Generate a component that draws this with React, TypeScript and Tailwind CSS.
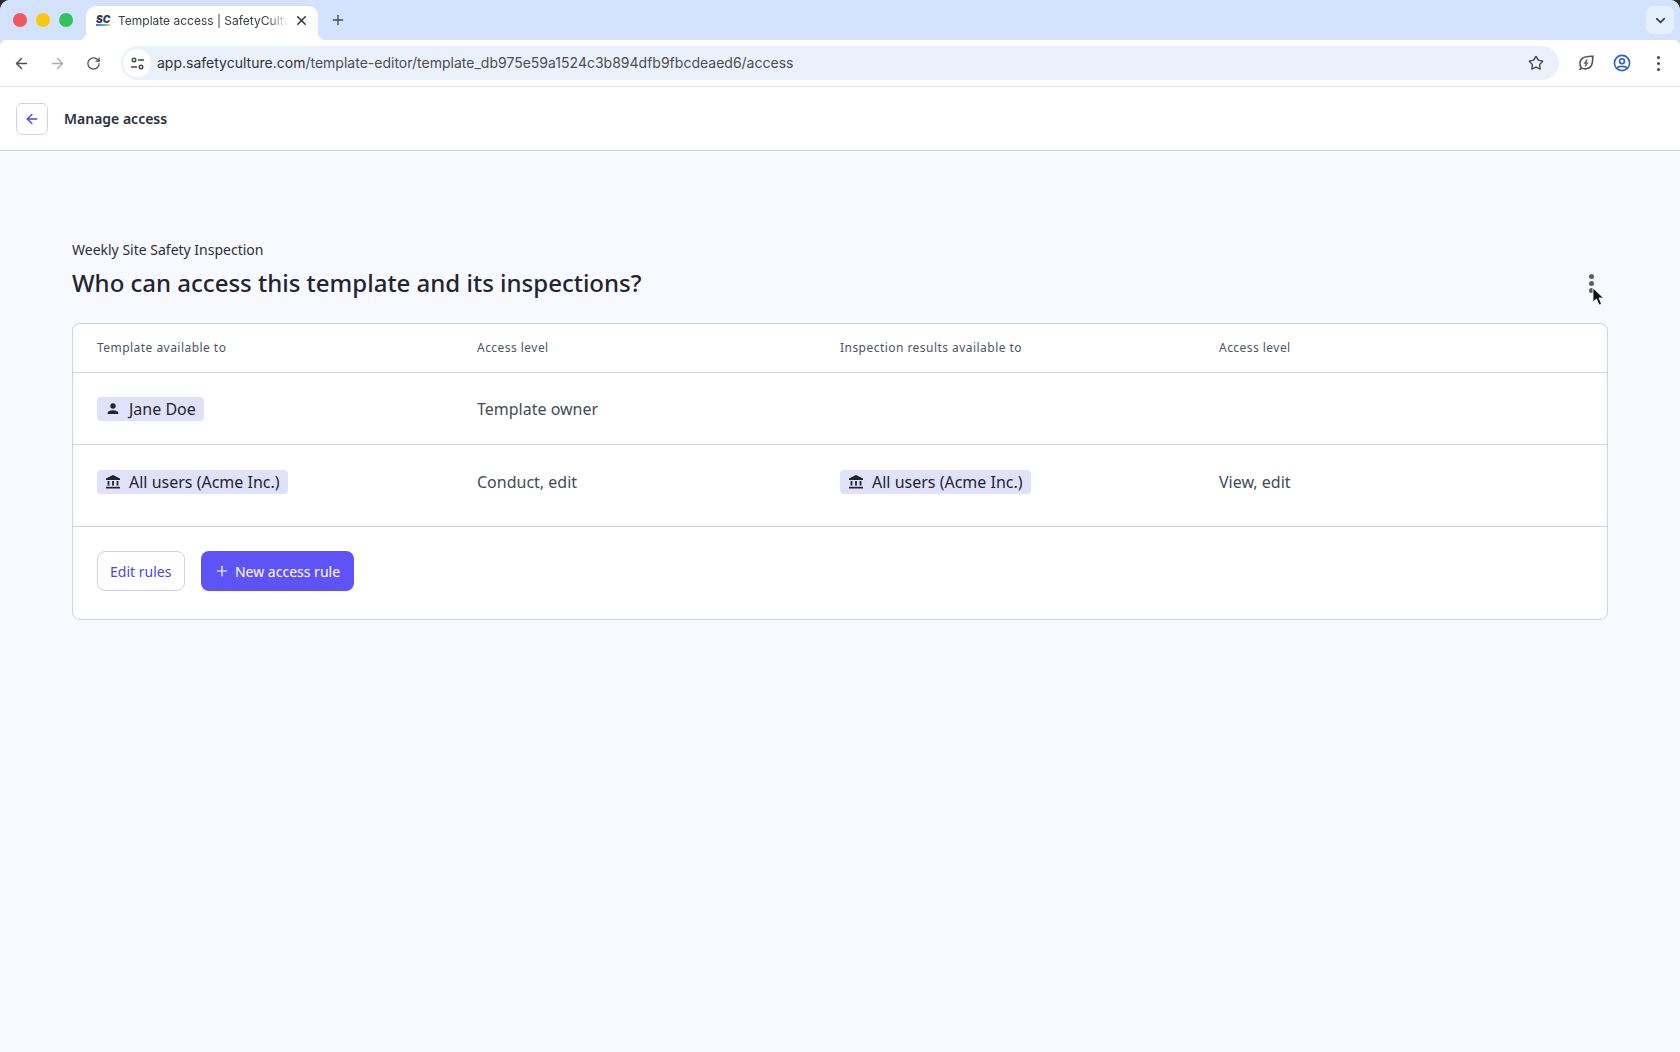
import { ArrowLeft, ArrowRight, ChevronDown, Plus, RotateCw, Star, X } from "lucide-react";

const font = "font-['Noto_Sans',sans-serif]";

function BankIcon() {
  return (
    <svg width="16" height="16" viewBox="0 0 16 16" className="text-[#1f2533] shrink-0" fill="currentColor">
      <path d="M8 1 L15 4.6 V6 H1 V4.6 Z" />
      <rect x="2.6" y="7" width="1.8" height="4.6" />
      <rect x="7.1" y="7" width="1.8" height="4.6" />
      <rect x="11.6" y="7" width="1.8" height="4.6" />
      <rect x="1" y="12.8" width="14" height="1.7" />
    </svg>
  );
}

function UserIcon() {
  return (
    <svg width="16" height="16" viewBox="0 0 16 16" className="text-[#1f2533] shrink-0" fill="currentColor">
      <circle cx="8" cy="5" r="2.7" />
      <path d="M2.7 13 V11.8 C2.7 10 6 9.2 8 9.2 C10 9.2 13.3 10 13.3 11.8 V13 Z" />
    </svg>
  );
}

function Chip({ icon, label }: { icon: React.ReactNode; label: string }) {
  return (
    <span className="flex h-6 w-fit items-center gap-[8px] rounded-[4px] bg-[#e0e2fb] pl-[8px] pr-[8px] text-[16px] text-[#1f2533]">
      {icon}
      {label}
    </span>
  );
}

function Browser() {
  return (
    <div className="bg-[#d3e3fd] font-['Inter',sans-serif]">
      <div className="flex h-10 items-end">
        <div className="flex h-10 w-[86px] shrink-0 items-center gap-[9px] pb-[1px] pl-[13px]">
          <span className="h-[14px] w-[14px] rounded-full bg-[#f4585a]" />
          <span className="h-[14px] w-[14px] rounded-full bg-[#f9c80e]" />
          <span className="h-[14px] w-[14px] rounded-full bg-[#33c35a]" />
        </div>
        <div className="relative flex h-[34px] w-[232px] items-center rounded-t-[10px] bg-white pb-[5px] pl-[10px] pr-[9px]">
          {/* flared tab foot */}
          <span className="absolute bottom-0 left-[-8px] h-2 w-2 bg-[radial-gradient(circle_at_0_0,transparent_8px,#fff_8.5px)]" />
          <span className="absolute bottom-0 right-[-8px] h-2 w-2 bg-[radial-gradient(circle_at_100%_0,transparent_8px,#fff_8.5px)]" />
          <span className="flex w-[22px] flex-col items-start">
            <span className="text-[10px] leading-[9px] font-black italic text-[#333a55]">SC</span>
            <span className="h-[2px] w-[14px] bg-[linear-gradient(90deg,#7b5cf0,#32b6e8,#f2c23d)]" />
          </span>
          <span className="w-[170px] overflow-hidden text-[12px] whitespace-nowrap text-[#3c4043] [mask-image:linear-gradient(90deg,#000_88%,transparent_100%)]">
            Template access | SafetyCulture
          </span>
          <X size={15} strokeWidth={2.4} className="ml-auto text-[#30343a]" />
        </div>
        <div className="flex h-10 items-center pl-[12px]">
          <Plus size={16} strokeWidth={2} className="text-[#474a50]" />
        </div>
        <div className="ml-auto flex h-10 items-center pr-[6px]">
          <div className="flex h-7 w-7 items-center justify-center rounded-lg bg-[#e6effd]">
            <ChevronDown size={15} strokeWidth={2.4} className="text-[#30343a]" />
          </div>
        </div>
      </div>
      <div className="flex h-[47px] items-center rounded-t-[6px] border-b border-[#e3e6f0] bg-white pl-[13px]">
        <ArrowLeft size={17} strokeWidth={2} className="text-[#4a4d52]" />
        <ArrowRight size={17} strokeWidth={2} className="ml-[19px] text-[#a9abaf]" />
        <RotateCw size={15} strokeWidth={2} className="ml-[20px] text-[#4a4d52]" />
        <div className="ml-[20px] flex h-[34px] w-[1438px] items-center rounded-full bg-[#eaf1fb] pl-[2px] pr-[15px]">
          <div className="flex h-[28px] w-[28px] items-center justify-center rounded-full bg-white">
            <svg width="15" height="15" viewBox="0 0 15 15" fill="none" stroke="#45484d" strokeWidth="1.4">
              <circle cx="4" cy="4" r="1.8" />
              <path d="M8 4 H14 M1 11 H7" />
              <circle cx="11" cy="11" r="1.8" />
            </svg>
          </div>
          <span className="ml-[6px] pb-[2px] text-[14px] tracking-[0.005px] text-[#2f3236]">
            app.safetyculture.com<span className="text-[#4a4d52]">/template-editor/template_db975e59a1524c3b894dfb9fbcdeaed6/access</span>
          </span>
          <Star size={16} strokeWidth={2} className="ml-auto text-[#45484d]" />
        </div>
        <svg width="18" height="18" viewBox="0 0 18 18" fill="none" stroke="#50535a" strokeWidth="1.6" className="ml-[18px]">
          <path d="M2.5 16 L4.4 13.9 C2 11 2.6 6.5 5.6 4.2 C8 2.4 12 2.4 15.8 2.2 C15.8 6 15.8 10 13.8 12.4 C11.5 15 7.4 15.6 4.4 13.9" />
          <path d="M10.2 5.6 L7.8 9.2 H10.2 L8 12.4" strokeWidth="1.3" />
        </svg>
        <svg width="18" height="18" viewBox="0 0 18 18" fill="none" stroke="#2c63c0" strokeWidth="1.6" className="ml-[18px]">
          <circle cx="9" cy="9" r="7.6" />
          <circle cx="9" cy="7.2" r="2.4" />
          <path d="M4.2 14 C5.4 11.8 12.6 11.8 13.8 14" />
        </svg>
        <span className="ml-[26px] flex flex-col gap-[3px]">
          <span className="h-[3px] w-[3px] rounded-full bg-[#45484d]" />
          <span className="h-[3px] w-[3px] rounded-full bg-[#45484d]" />
          <span className="h-[3px] w-[3px] rounded-full bg-[#45484d]" />
        </span>
      </div>
    </div>
  );
}

export default function App() {
  return (
    <div className={`relative h-[1052px] w-full overflow-hidden bg-[#2a2a2a] ${font}`}>
      <div className="flex h-full flex-col overflow-hidden rounded-t-[10px] bg-[#f8f9fe]">
        <Browser />
        <div className="flex h-[64px] items-center border-b border-[#cdd5e5] bg-white pl-4">
          <button className="flex h-[32px] w-[32px] items-center justify-center rounded-[6px] border border-[#d0d4ea] bg-white">
            <ArrowLeft size={16} strokeWidth={2} className="text-[#4f46d8]" />
          </button>
          <span className="ml-[16px] text-[14px] font-semibold text-[#2a2f3d]">Manage access</span>
        </div>

        <div className="pl-[72px] pr-[72px] pt-[89px]">
          <div className="text-[14px] leading-5 text-[#2a2f3d]">Weekly Site Safety Inspection</div>
          <div className="mt-[7px] flex items-center justify-between">
            <h1 className="text-[24px] leading-8 font-medium text-[#1f2533]">
              Who can access this template and its inspections?
            </h1>
            <span className="mr-[14px] mt-[1px] flex flex-col gap-[2px]">
              <span className="h-[5px] w-[5px] rounded-full bg-[#5a5e6a]" />
              <span className="h-[5px] w-[5px] rounded-full bg-[#5a5e6a]" />
              <span className="h-[5px] w-[5px] rounded-full bg-[#5a5e6a]" />
            </span>
          </div>

          <div className="mt-[24px] rounded-[8px] border border-[#cdd2e4] bg-white">
            <div className="grid h-[49px] grid-cols-[380px_363px_379px_1fr] items-center border-b border-[#cdd2e4] pl-[24px] text-[12px] tracking-[0.46px] text-[#4e5566]">
              <span>Template available to</span>
              <span>Access level</span>
              <span>Inspection results available to</span>
              <span>Access level</span>
            </div>
            <div className="grid h-[72px] grid-cols-[380px_363px_379px_1fr] items-center border-b border-[#cdd2e4] pl-[24px] text-[16px] text-[#434a5a]">
              <Chip icon={<UserIcon />} label="Jane Doe" />
              <span>Template owner</span>
              <span />
              <span />
            </div>
            <div className="grid h-[82px] grid-cols-[380px_363px_379px_1fr] items-center border-b border-[#cdd2e4] pb-[7px] pl-[24px] text-[16px] text-[#434a5a]">
              <Chip icon={<BankIcon />} label="All users (Acme Inc.)" />
              <span>Conduct, edit</span>
              <Chip icon={<BankIcon />} label="All users (Acme Inc.)" />
              <span>View, edit</span>
            </div>
            <div className="flex h-[92px] items-start gap-[16px] pl-[24px] pt-[24px]">
              <button className="h-[40px] w-[87.5px] rounded-[8px] border border-[#cdd2e4] bg-white text-[14px] text-[#4f46d8]">
                Edit rules
              </button>
              <button className="flex h-[40px] w-[153px] items-center justify-center gap-[5px] rounded-[8px] bg-[#5e54f5] text-[14px] text-white">
                <Plus size={16} strokeWidth={1.8} />
                New access rule
              </button>
            </div>
          </div>
        </div>
      </div>

      <svg width="14" height="20" viewBox="0 0 14 20" className="absolute left-[1592px] top-[287px]">
        <path d="M1 1 V15 L4.5 12 L7 18 L9.5 17 L7 11 H11.5 Z" fill="#111" stroke="#fff" strokeWidth="0.8" />
      </svg>
    </div>
  );
}
